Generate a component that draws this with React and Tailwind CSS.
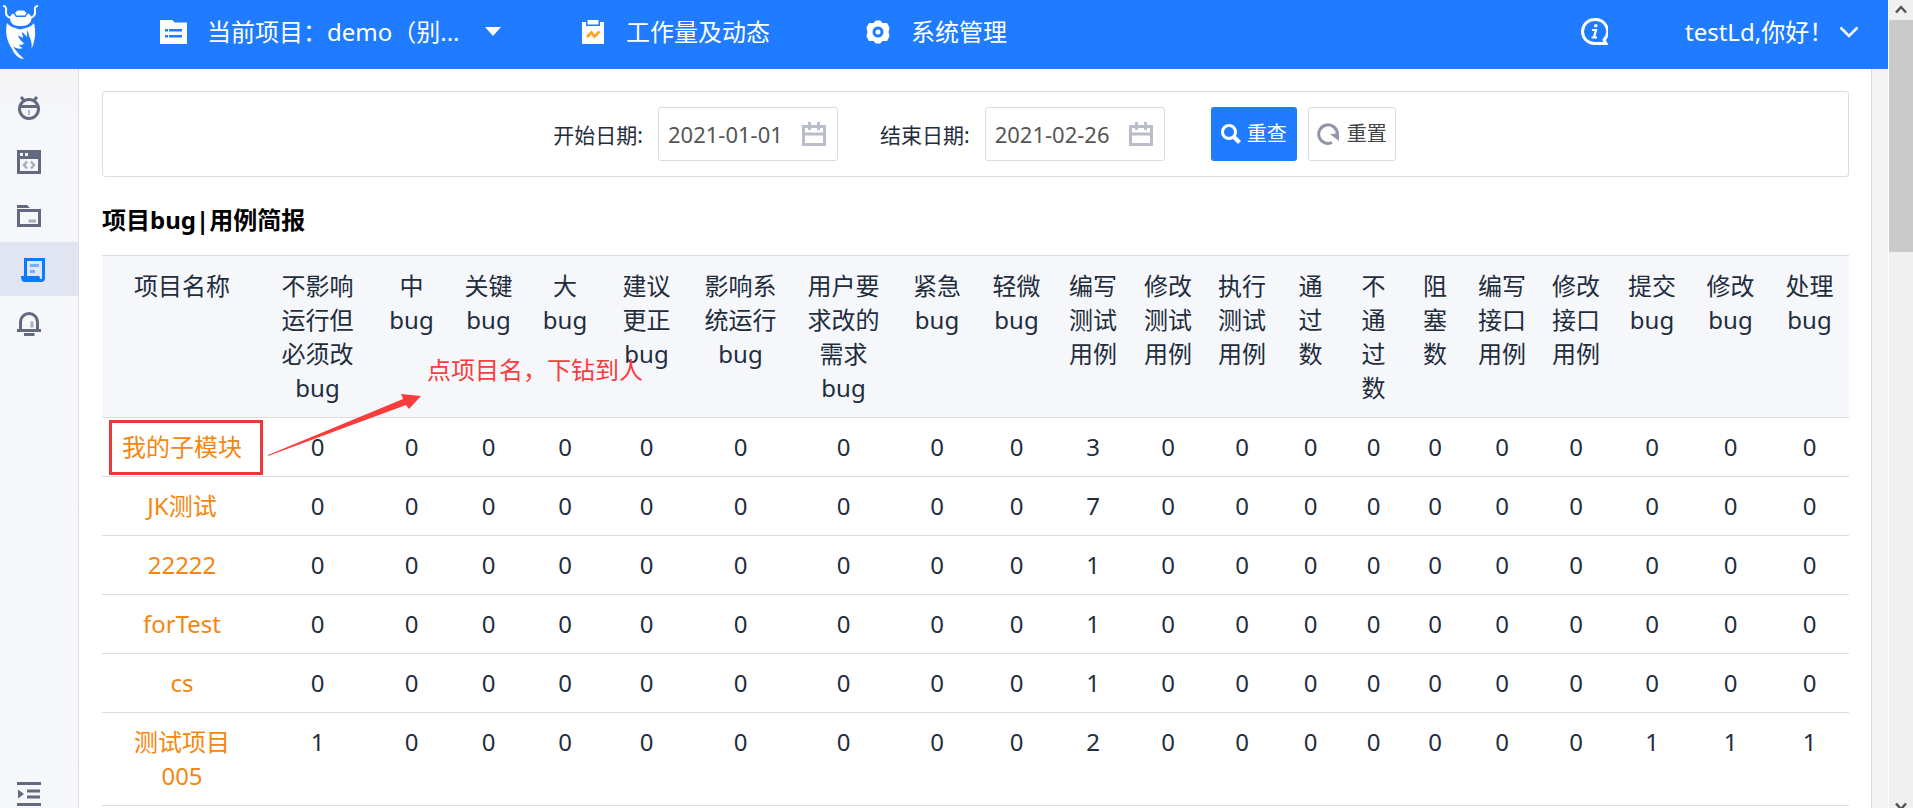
import React, { useState } from "react";

const columns = [
  { title: "项目名称", width: "w-[160px]" },
  { title: "不影响运行但必须改bug", width: "w-[111px]" },
  { title: "中bug", width: "w-[77px]" },
  { title: "关键bug", width: "w-[77px]" },
  { title: "大bug", width: "w-[76px]" },
  { title: "建议更正bug", width: "w-[87px]" },
  { title: "影响系统运行bug", width: "w-[101px]" },
  { title: "用户要求改的需求bug", width: "w-[105px]" },
  { title: "紧急bug", width: "w-[82px]" },
  { title: "轻微bug", width: "w-[77px]" },
  { title: "编写测试用例", width: "w-[76px]" },
  { title: "修改测试用例", width: "w-[74px]" },
  { title: "执行测试用例", width: "w-[74px]" },
  { title: "通过数", width: "w-[63px]" },
  { title: "不通过数", width: "w-[63px]" },
  { title: "阻塞数", width: "w-[60px]" },
  { title: "编写接口用例", width: "w-[74px]" },
  { title: "修改接口用例", width: "w-[74px]" },
  { title: "提交bug", width: "w-[78px]" },
  { title: "修改bug", width: "w-[79px]" },
  { title: "处理bug", width: "w-[79px]" },
];

const rows = [
  { name: "我的子模块", values: [0, 0, 0, 0, 0, 0, 0, 0, 0, 3, 0, 0, 0, 0, 0, 0, 0, 0, 0, 0] },
  { name: "JK测试", values: [0, 0, 0, 0, 0, 0, 0, 0, 0, 7, 0, 0, 0, 0, 0, 0, 0, 0, 0, 0] },
  { name: "22222", values: [0, 0, 0, 0, 0, 0, 0, 0, 0, 1, 0, 0, 0, 0, 0, 0, 0, 0, 0, 0] },
  { name: "forTest", values: [0, 0, 0, 0, 0, 0, 0, 0, 0, 1, 0, 0, 0, 0, 0, 0, 0, 0, 0, 0] },
  { name: "cs", values: [0, 0, 0, 0, 0, 0, 0, 0, 0, 1, 0, 0, 0, 0, 0, 0, 0, 0, 0, 0] },
  { name: "测试项目005", values: [1, 0, 0, 0, 0, 0, 0, 0, 0, 2, 0, 0, 0, 0, 0, 0, 0, 1, 1, 1] },
];

function Logo() {
  return (
    <svg width="36" height="54" viewBox="0 0 36 54" fill="white">
      <path d="M0 1c3 0 3.500 2 3 5-.4 3 1 6 5 7" fill="none" stroke="white" strokeWidth="2" />
      <path d="M35 1c-3 0-3.500 2-3 5 .4 3-1 6-5 7" fill="none" stroke="white" strokeWidth="2" />
      <path d="M14.500 5.500h6.500l2.500 2.500-1.500 2.500h-8.500L12 8z" />
      <path d="M10.500 8.500l2.500 3.500h9.500l2.500-3.500c3 1 4 4 3 7.500-2 4-5.500 5-10.500 5S9 20 7.500 16c-1-3.500 0-6.500 3-7.500z" />
      <path d="M4 18c3 4 8 5 13.500 6.500C22 23 28 22.500 31 18c2 9 1.500 17-2.500 26 .5-5 0-9-2.500-13-.2-3-1-4.500-2-6 .3 3 .2 4.500-.5 7-1.200-2.500-3-4-5-5 1 2.500 1.500 4 1.500 6-2-1.500-3.500-2-5-2.500 1 3.500 3.500 5.500 6 8-1.500 1.500-3 1.500-5 1 .5 1.500 2 3 4 3.500-3.500 1.500-7 .5-10-2 2.500 5 6.500 8.500 11 13-5.500 0-9.500-4.500-12-10C3.500 35.500 2 27 4 18z" />
    </svg>
  );
}

function ProjectIcon() {
  return (
    <svg width="27" height="24" viewBox="0 0 27 24">
      <path d="M0 0h12.500l2 2.500H27V24H0z" fill="white" />
      <path d="M5 9h3v2.500H5zm4 0h13v2.500H9zM5 15h3v2.500H5zm4 0h13v2.500H9z" fill="#1f7bff" />
    </svg>
  );
}

function WorkIcon() {
  return (
    <svg width="24" height="24" viewBox="0 0 24 24">
      <path d="M1 2h4v4h14V2h4v22H1z" fill="white" />
      <path d="M6.500 0h11v4.500h-11z" fill="white" />
      <path d="M6 17l4.500-4.500 3 4 5-5" fill="none" stroke="#ff9f1c" strokeWidth="2.500" />
    </svg>
  );
}

function SettingIcon() {
  return (
    <svg width="24" height="24" viewBox="0 0 24 24">
      <path
        d="M10 1.500h4l2 2.500 4.500 0 2 4-1 4 1 4-2 4H16l-2 2.500h-4L8 20H3.500l-2-4 1-4-1-4 2-4H8z"
        fill="white"
        stroke="white"
        strokeWidth="2"
        strokeLinejoin="round"
      />
      <circle cx="12" cy="12" r="4" fill="white" stroke="#1f7bff" strokeWidth="3" />
    </svg>
  );
}

function InfoIcon() {
  return (
    <svg width="27" height="27" viewBox="0 0 27 27">
      <path
        d="M13.500 1.500a12 12 0 1 0 0 24H25l-2-3.500a12 12 0 0 0-9.500-20.500z"
        fill="none"
        stroke="white"
        strokeWidth="3"
      />
      <circle cx="14.800" cy="7.800" r="1.800" fill="white" />
      <path d="M11 12h4l-2 7.500h3M10.500 19.500h3" fill="none" stroke="white" strokeWidth="2.200" />
    </svg>
  );
}

function BugIcon() {
  return (
    <svg width="24" height="24" viewBox="0 0 24 24" fill="none" stroke="#626980">
      <path d="M4 1l3.500 4M20 1l-3.500 4" strokeWidth="3" />
      <circle cx="12" cy="13" r="9.500" strokeWidth="3" />
      <path d="M3 10.500h18" strokeWidth="3" />
      <path d="M12 14v5" strokeWidth="2" stroke="#b3b8c5" />
    </svg>
  );
}

function CodeIcon() {
  return (
    <svg width="24" height="24" viewBox="0 0 24 24">
      <path d="M0 0h24v24H0zM3 9v12h18V9zM3 3v3h3V3zm5 0v3h3V3z" fill="#626980" fillRule="evenodd" />
      <path d="M10 11.500L7 15l3 3.500M14 11.500l3 3.500-3 3.500" fill="none" stroke="#a8aebc" strokeWidth="2.500" />
    </svg>
  );
}

function FolderIcon() {
  return (
    <svg width="24" height="24" viewBox="0 0 24 24">
      <path d="M0 1h10l3 3H0zM0 5h24v18H0zm3 3v12h18V8z" fill="#626980" fillRule="evenodd" />
      <path d="M11.500 15.500H19v3h-7.500z" fill="#a8aebc" />
    </svg>
  );
}

function ReportIcon() {
  return (
    <svg width="24" height="24" viewBox="0 0 24 24">
      <path d="M4.500 18V1.500h18V20a2.500 2.500 0 0 1-5 0" fill="none" stroke="#0a7bff" strokeWidth="3" />
      <path d="M0 18h18.500c0 3 1 4.500 3 6H4c-2.500 0-4-1.500-4-6z" fill="#0a7bff" />
      <path d="M9 6h9v3H9zm0 6h5v3H9z" fill="#70b0ff" />
    </svg>
  );
}

function BellIcon() {
  return (
    <svg width="24" height="24" viewBox="0 0 24 24">
      <path d="M3.500 18V10a8.500 8.500 0 0 1 17 0v8" fill="none" stroke="#626980" strokeWidth="3" />
      <path d="M0 17h24v3H0zM7 21h10.500v3H7z" fill="#626980" />
      <path d="M13.500 9.500h3v6h-3z" fill="#a8aebc" />
    </svg>
  );
}

function ExpandIcon() {
  return (
    <svg width="24" height="24" viewBox="0 0 24 24" fill="#626980">
      <path d="M0 0h24v3H0zM0 21h24v3H0zM10 7.500h13v3H10zM10 13.500h13v3H10zM1 7.500L7 12l-6 4.500z" />
    </svg>
  );
}

function CalendarIcon() {
  return (
    <svg width="24" height="24" viewBox="0 0 24 24" fill="none" stroke="#b9bcc9" strokeWidth="3">
      <path d="M1.500 4.500h21v18h-21zM1.500 12h21M7.500 0v8M16.500 0v8" />
    </svg>
  );
}

function DateField({ id, label, value, onChange }) {
  return (
    <div className="flex items-center">
      <label htmlFor={id} className="mr-[15px] pt-0.5 text-[21px] text-[#1f2d3d]">
        {label}
      </label>
      <div className="flex h-[54px] w-[180px] items-center justify-between rounded-[3px] border border-[#dcdcdc] bg-white pr-[11px] pl-[9px]">
        <input
          id={id}
          type="text"
          value={value}
          onChange={(e) => onChange(e.target.value)}
          className="w-[124px] pt-0.5 text-[22px] text-[#555] outline-none"
        />
        <CalendarIcon />
      </div>
    </div>
  );
}

const menus = [
  { key: "bug", icon: <BugIcon /> },
  { key: "case", icon: <CodeIcon /> },
  { key: "file", icon: <FolderIcon /> },
  { key: "report", icon: <ReportIcon /> },
  { key: "notice", icon: <BellIcon /> },
];

export default function App() {
  const [startDate, setStartDate] = useState("2021-01-01");
  const [endDate, setEndDate] = useState("2021-02-26");
  const [active, setActive] = useState("report");

  const handleReset = () => {
    setStartDate("2021-01-01");
    setEndDate("2021-02-26");
  };

  return (
    <div className="flex h-screen overflow-hidden bg-white font-['Noto_Sans','Noto_Sans_CJK_SC',sans-serif] text-2xl text-[#1f2d3d]">
      <div className="flex min-w-0 flex-1 flex-col">
        {/* TOP BAR */}
        <header className="flex h-[69px] shrink-0 items-center bg-[#1f7bff] pb-1.5 text-white">
          <a href="#home" aria-label="home" className="w-40 pl-[3px]">
            <Logo />
          </a>
          <button type="button" className="flex items-center">
            <ProjectIcon />
            <span className="ml-5 w-[278px] text-left">当前项目：demo（别...</span>
            <svg width="16" height="9" viewBox="0 0 16 9">
              <path d="M0 0h16L8 9z" fill="white" />
            </svg>
          </button>
          <a href="#work" className="ml-20 flex items-center gap-[21px]">
            <WorkIcon />
            工作量及动态
          </a>
          <a href="#system" className="ml-24 flex items-center gap-[21px]">
            <SettingIcon />
            系统管理
          </a>
          <a href="#info" aria-label="info" className="ml-auto">
            <InfoIcon />
          </a>
          <button type="button" className="mr-[29px] ml-[77px] flex w-[174px] items-center justify-between whitespace-nowrap">
            testLd,你好！
            <svg width="20" height="12" viewBox="0 0 20 12">
              <path d="M1.500 1.500L10 10l8.500-8.500" fill="none" stroke="white" strokeWidth="2.500" />
            </svg>
          </button>
        </header>

        <div className="flex min-h-0 flex-1 bg-[#f4f4f5] pr-4">
          {/* SIDE MENU */}
          <nav className="flex w-[79px] shrink-0 flex-col border-r border-[#dcdee3] bg-gradient-to-b from-[#f5f5f6] to-[#f5f7fa] to-10% pt-[11px]">
            {menus.map((m) => (
              <button
                key={m.key}
                type="button"
                aria-label={m.key}
                onClick={() => setActive(m.key)}
                className={
                  active === m.key
                    ? "flex h-[54px] items-center bg-[#e1e5f2] pt-0.5 pl-[21px]"
                    : "flex h-[54px] items-center pt-0.5 pl-[17px]"
                }
              >
                {m.icon}
              </button>
            ))}
            <button type="button" aria-label="expand" className="mt-auto mb-0.5 pl-[17px]">
              <ExpandIcon />
            </button>
          </nav>

          <main className="min-w-0 flex-1 overflow-hidden border-r border-[#dcdee3] bg-white pt-[22px] pr-[22px] pl-[23px]">
            {/* FILTER */}
            <form
              className="flex h-[86px] items-center justify-center rounded-[3px] border border-[#dcdcdc]"
              onSubmit={(e) => e.preventDefault()}
            >
              <DateField id="start" label="开始日期:" value={startDate} onChange={setStartDate} />
              <div className="ml-[42px]">
                <DateField id="end" label="结束日期:" value={endDate} onChange={setEndDate} />
              </div>
              <button
                type="submit"
                className="ml-[46px] flex h-[54px] items-center gap-1.5 rounded-[3px] bg-[#1f7bff] px-2.5 text-xl text-white"
              >
                <svg width="20" height="20" viewBox="0 0 20 20" fill="none" stroke="white" strokeWidth="3">
                  <circle cx="8" cy="8" r="6.500" />
                  <path d="M12.500 12.500l6 6" strokeWidth="4" />
                </svg>
                重查
              </button>
              <button
                type="button"
                onClick={handleReset}
                className="mr-0.5 ml-[11px] flex h-[54px] items-center gap-2 rounded-[3px] border border-[#dcdcdc] bg-white px-2 text-xl text-[#444]"
              >
                <svg width="22" height="22" viewBox="0 0 22 22">
                  <path d="M15 19.500A9.300 9.300 0 1 1 20.300 11" fill="none" stroke="#9096a8" strokeWidth="3" />
                  <path d="M13 11l9-.5v7.500z" fill="#9096a8" />
                </svg>
                重置
              </button>
            </form>

            <h2 className="mt-[25px] mb-[18px] leading-[35px] font-bold text-black">项目bug|用例简报</h2>

            {/* REPORT TABLE */}
            <div className="relative">
              <table className="w-full table-fixed border-t border-[#dcdcdc] text-center leading-[34px]">
                <colgroup>
                  {columns.map((c, i) => (
                    <col key={i} className={c.width} />
                  ))}
                </colgroup>
                <thead>
                  <tr className="border-b border-[#dcdcdc] bg-[#f5f7fa]">
                    {columns.map((c, i) => (
                      <th key={i} className="px-3 pt-[13px] pb-3 align-top font-normal">
                        {c.title}
                      </th>
                    ))}
                  </tr>
                </thead>
                <tbody>
                  {rows.map((r) => (
                    <tr key={r.name} className="border-b border-[#dcdcdc]">
                      <td className="px-4 py-3 align-top">
                        <a href={`#${r.name}`} className="text-[#f5860f]">
                          {r.name}
                        </a>
                      </td>
                      {r.values.map((v, i) => (
                        <td key={i} className="px-3 py-3 align-top">
                          {v}
                        </td>
                      ))}
                    </tr>
                  ))}
                </tbody>
              </table>

              {/* hint over the first row */}
              <div className="pointer-events-none absolute top-[165px] left-[7px] h-[55px] w-[154px] border-[3px] border-[#e8393d]" />
              <svg
                className="pointer-events-none absolute top-[138px] left-[165px]"
                width="156"
                height="64"
                viewBox="0 0 156 64"
              >
                <path d="M1 62L136 6l-2-5 20 2-12 13-3-4L1 63z" fill="#f93c3c" />
              </svg>
              <p className="pointer-events-none absolute top-[99px] left-[325px] text-[#f93c3c]">
                点项目名，下钻到人
              </p>
            </div>
          </main>
        </div>
      </div>

      {/* SCROLLBAR */}
      <div className="ml-px flex w-6 shrink-0 flex-col items-center bg-[#f0f0f0]">
        <svg className="my-1 shrink-0" width="12" height="12" viewBox="0 0 12 12">
          <path d="M1 8.500L6 3l5 5.500" fill="none" stroke="#555" strokeWidth="2.500" />
        </svg>
        <div className="h-[232px] w-full bg-[#cacaca]" />
        <svg className="mt-auto -mb-1 shrink-0" width="12" height="12" viewBox="0 0 12 12">
          <path d="M1 3.500L6 9l5-5.500" fill="none" stroke="#555" strokeWidth="2.500" />
        </svg>
      </div>
    </div>
  );
}
